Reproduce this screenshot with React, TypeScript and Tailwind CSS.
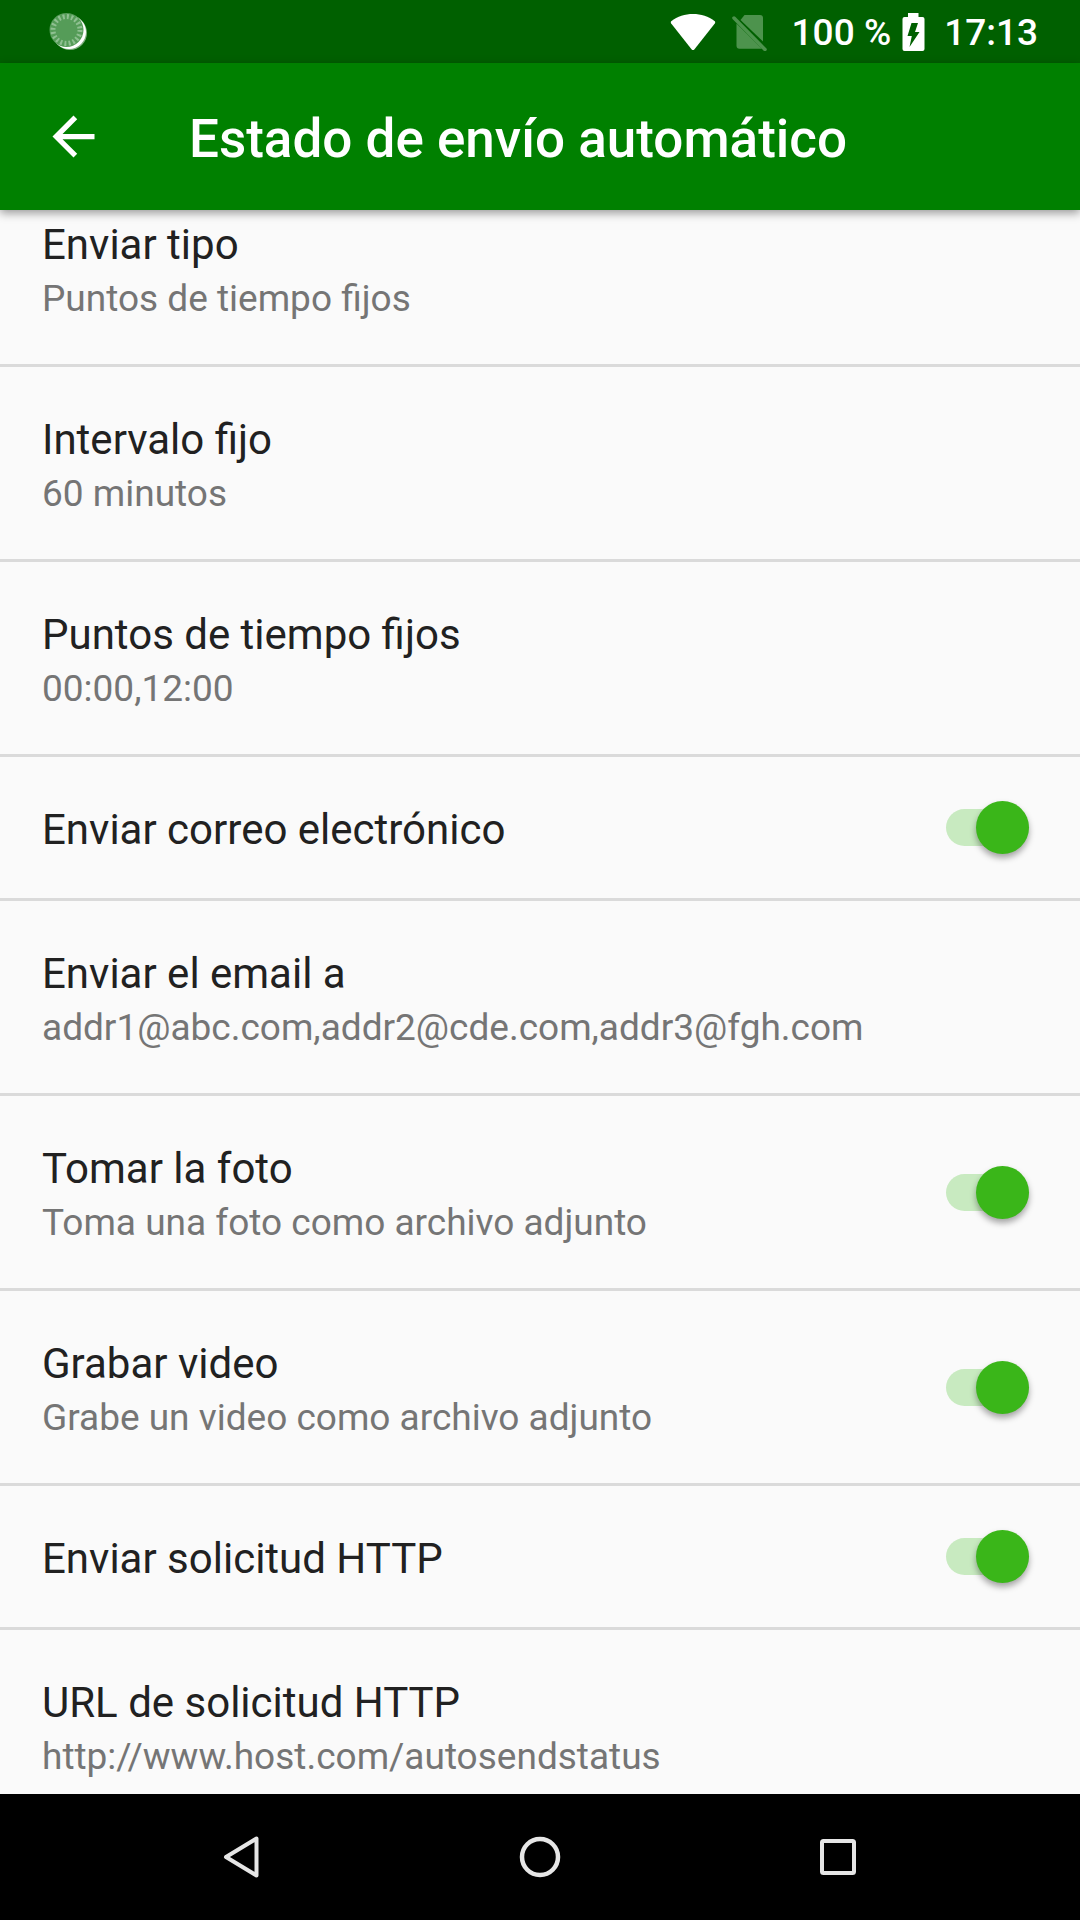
import { useState } from "react";

type Item = { title: string; summary?: string; toggle?: boolean };

const items: Item[] = [
  { title: "Enviar tipo", summary: "Puntos de tiempo fijos" },
  { title: "Intervalo fijo", summary: "60 minutos" },
  { title: "Puntos de tiempo fijos", summary: "00:00,12:00" },
  { title: "Enviar correo electrónico", toggle: true },
  { title: "Enviar el email a", summary: "addr1@abc.com,addr2@cde.com,addr3@fgh.com" },
  { title: "Tomar la foto", summary: "Toma una foto como archivo adjunto", toggle: true },
  { title: "Grabar video", summary: "Grabe un video como archivo adjunto", toggle: true },
  { title: "Enviar solicitud HTTP", toggle: true },
  { title: "URL de solicitud HTTP", summary: "http://www.host.com/autosendstatus" },
];

function StatusBar() {
  return (
    <div className="flex h-[63px] items-center bg-[#006000] pr-[42px] pl-[49px] text-[37px] font-medium text-white">
      <svg className="size-[38px]" viewBox="0 0 38 38" aria-hidden="true">
        <circle cx="21" cy="20" r="17" fill="#80b080" />
        <circle cx="20" cy="19" r="17" fill="#fff" />
        <circle cx="17.5" cy="17" r="17" fill="#559c58" />
        <circle cx="17.5" cy="17" r="13.5" fill="none" stroke="#8fc091" strokeWidth="5" strokeDasharray="2 2.24" />
      </svg>
      <div className="ml-auto flex items-center">
        <svg className="h-[38px] w-[46px]" viewBox="0 0 46 38" fill="#fff" aria-hidden="true">
          <path d="M1.2 8.2C.6 9 .7 9.700 1.200 10.400L21.500 36.200Q23 38 24.500 36.200L44.800 10.400C45.300 9.700 45.400 9 44.800 8.200C38.500 3.200 31 1 23 1S7.500 3.200 1.200 8.200Z" />
        </svg>
        <svg className="ml-[16px] h-[38px] w-[36px]" viewBox="0 0 36 38" aria-hidden="true">
          <path d="M12.500 2H28Q31 2 31 5V28.500L8.500 7Z" fill="#4d934d" />
          <path d="M4.500 10.500L30 35.700H7.500Q4.500 35.700 4.500 32.700Z" fill="#4d934d" />
          <path d="M2 5L33 36.500" stroke="#4d934d" strokeWidth="3.500" strokeLinecap="round" />
        </svg>
        <span className="ml-[24px] pt-[3px]">100 %</span>
        <svg className="ml-[11px] h-[38px] w-[23px]" viewBox="0 0 23 38" aria-hidden="true">
          <path d="M6 0H16.500V4H20.500Q22.500 4 22.500 6V36Q22.500 38 20.500 38H2.500Q.5 38 .5 36V6Q.5 4 2.500 4H6Z" fill="#fff" />
          <path d="M9.500 10H16L13 19H17.500L7.500 34L9.800 23H5.500Z" fill="#006000" />
        </svg>
        <span className="ml-[19px] pt-[3px]">17:13</span>
      </div>
    </div>
  );
}

function Text({ item }: { item: Item }) {
  return (
    <span className="flex min-w-0 flex-1 flex-col">
      <span className="text-[42px] leading-[60px] text-[#212121]">{item.title}</span>
      {item.summary && (
        <span className="text-[37px] leading-[47px] break-words text-[#757575]">{item.summary}</span>
      )}
    </span>
  );
}

function Row({ item, first, last }: { item: Item; first: boolean; last: boolean }) {
  const [on, setOn] = useState(true);
  if (item.toggle) {
    return (
      <label className="flex w-full cursor-pointer items-center pr-[51px] pl-[42px]">
        <span className={item.summary ? "flex min-w-0 flex-1 pt-[43px] pb-[42px]" : "flex min-w-0 flex-1 pt-[43px] pb-[38px]"}>
          <Text item={item} />
        </span>
        <input
          type="checkbox"
          role="switch"
          checked={on}
          onChange={(e) => setOn(e.target.checked)}
          className="peer sr-only"
        />
        <span className="flex h-[37px] w-[83px] items-center rounded-full bg-[#cfcfcf] peer-checked:justify-end peer-checked:bg-[#c8eac0] peer-checked:[&>span]:bg-[#3ab619]">
          <span className="size-[53px] shrink-0 rounded-full bg-[#fafafa] shadow-[0_4px_6px_rgba(0,0,0,0.35)]" />
        </span>
      </label>
    );
  }
  return (
    <button
      type="button"
      className={
        first
          ? "flex w-full px-[42px] pt-[5px] pb-[42px] text-left"
          : last
            ? "flex w-full px-[42px] pt-[43px] text-left"
            : "flex w-full px-[42px] pt-[43px] pb-[42px] text-left"
      }
    >
      <Text item={item} />
    </button>
  );
}

export default function App() {
  return (
    <div className="flex min-h-screen flex-col bg-[#fafafa] font-['Roboto',sans-serif]">
      <StatusBar />
      <header className="relative flex h-[147px] items-center bg-[#008000] pl-[42px] text-white shadow-[0_3px_9px_rgba(0,0,0,0.4)]">
        <button type="button" aria-label="Atrás" className="size-[63px]">
          <svg className="size-[63px]" viewBox="0 0 24 24" fill="currentColor">
            <path d="M20 11H7.830l5.590-5.590L12 4l-8 8 8 8 1.410-1.410L7.830 13H20v-2z" />
          </svg>
        </button>
        <h1 className="ml-[84px] pt-[4px] text-[53px] leading-[62px] font-medium">Estado de envío automático</h1>
      </header>
      <main className="flex-1">
        <ul>
          {items.map((item, i) => (
            <li key={item.title} className="border-b-[3px] border-[#dadada] last:border-b-0">
              <Row item={item} first={i === 0} last={i === items.length - 1} />
            </li>
          ))}
        </ul>
      </main>
      <nav className="grid h-[126px] grid-cols-3 items-center justify-items-center bg-black px-[93px]">
        <button type="button" aria-label="Volver">
          <svg className="size-[48px]" viewBox="0 0 48 48" fill="none" stroke="#e6e6e6" strokeWidth="4" strokeLinejoin="round">
            <path d="M8 24L38.500 5.500V42.500Z" />
          </svg>
        </button>
        <button type="button" aria-label="Inicio">
          <svg className="size-[48px]" viewBox="0 0 48 48" fill="none" stroke="#e6e6e6" strokeWidth="4.500">
            <circle cx="24" cy="24" r="18" />
          </svg>
        </button>
        <button type="button" aria-label="Aplicaciones recientes">
          <svg className="size-[48px]" viewBox="0 0 48 48" fill="none" stroke="#e6e6e6" strokeWidth="4">
            <rect x="8" y="8" width="32" height="32" rx="1.500" />
          </svg>
        </button>
      </nav>
    </div>
  );
}
